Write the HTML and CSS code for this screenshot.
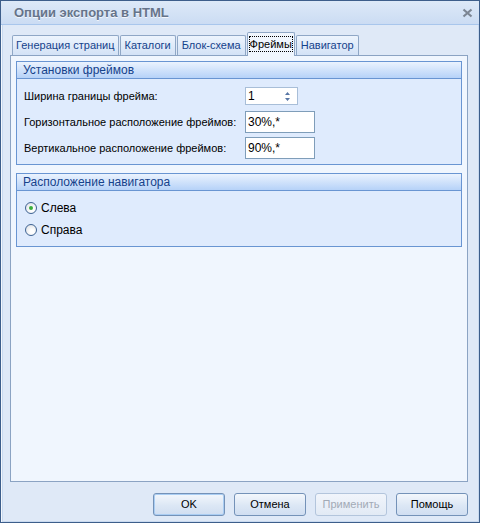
FILE: index.html
```html
<!doctype html>
<html lang="ru">
  <head>
    <meta charset="utf-8">
    <title>Опции экспорта в HTML</title>
    <link rel="stylesheet" href="styles.css">
  </head>
  <body>
    <div class="window">
      <div class="titlebar">
        <span class="title">Опции экспорта в HTML</span>
        <svg class="close" width="11" height="10" viewBox="0 0 11 10">
          <path d="M1.5 1.5 L9.5 8.5 M9.5 1.5 L1.5 8.5" stroke="#7c8694" stroke-width="2.2" fill="none"/>
        </svg>
      </div>
      <div class="client">
        <div class="tabs">
          <div class="tab">Генерация страниц</div>
          <div class="tab">Каталоги</div>
          <div class="tab">Блок-схема</div>
          <div class="tab active"><span class="focus">Фреймы</span></div>
          <div class="tab">Навигатор</div>
        </div>
        <div class="panel">
          <div class="group">
            <div class="group-head">Установки фреймов</div>
            <div class="group-body">
              <div class="row">
                <span class="label">Ширина границы фрейма:</span>
                <div class="spin">
                  <span>1</span>
                  <svg class="arrows" width="7" height="11" viewBox="0 0 7 11">
                    <path d="M3.5 1 L6 4 L1 4 Z M1 7 L6 7 L3.5 10 Z" fill="#5877a6"/>
                  </svg>
                </div>
              </div>
              <div class="row">
                <span class="label">Горизонтальное расположение фреймов:</span>
                <div class="field">30%,*</div>
              </div>
              <div class="row">
                <span class="label">Вертикальное расположение фреймов:</span>
                <div class="field">90%,*</div>
              </div>
            </div>
          </div>
          <div class="group second">
            <div class="group-head">Расположение навигатора</div>
            <div class="group-body radios">
              <div class="radio-row"><span class="radio checked"></span>Слева</div>
              <div class="radio-row"><span class="radio"></span>Справа</div>
            </div>
          </div>
        </div>
        <div class="buttons">
          <div class="btn default">OK</div>
          <div class="btn">Отмена</div>
          <div class="btn disabled">Применить</div>
          <div class="btn">Помощь</div>
        </div>
      </div>
    </div>
  </body>
</html>
```

FILE: styles.css
```css
body {
  margin: 0;
  font-family: "Liberation Sans", Arial, sans-serif;
  font-size: 11px;
  color: #000;
  background: #fff;
}

.window {
  width: 480px;
  height: 523px;
  box-sizing: border-box;
  border: 1px solid #3d5e8b;
  background: #dfe9f7;
  display: flex;
  flex-direction: column;
}

.titlebar {
  height: 23px;
  border-bottom: 1px solid #a8c6ec;
  background: linear-gradient(#dde9f8, #cbdcf3);
  display: flex;
  align-items: center;
  justify-content: space-between;
  padding: 0 6px 0 13px;
}

.title {
  font-weight: bold;
  font-size: 13px;
  color: #66748a;
  text-shadow: 0 1px 0 #f2f6fc;
}

.close {
  display: block;
}

.client {
  flex: 1;
  padding: 7px 0 0 9px;
  box-shadow: inset 1px 0 0 #f4f8fd, inset 2px 0 0 #c9daf0, inset -1px 0 0 #c9daf0, inset 0 -1px 0 #c9daf0;
}

.tabs {
  display: flex;
  align-items: flex-end;
  height: 23px;
  padding-left: 2px;
}

.tab {
  height: 19px;
  line-height: 19px;
  padding: 0 4px;
  margin-right: 1px;
  border: 1px solid #8fa7c6;
  border-bottom: none;
  border-radius: 2px 2px 0 0;
  background: linear-gradient(#edf4fd, #d3e2f6);
  color: #15428b;
}

.tab:first-child {
  padding: 0 3px;
}

.tab.active {
  height: 23px;
  line-height: 22px;
  margin: 0 1px -1px 0;
  padding: 0 2px;
  background: #f0f6fe;
  color: #000;
  position: relative;
  z-index: 1;
}

.focus {
  outline: 1px dotted #000;
  padding: 1px 0;
}

.panel {
  width: 446px;
  height: 415px;
  border: 1px solid #8ba3c3;
  background: #f0f6fe;
  padding: 5px;
}

.group {
  border: 1px solid #6995d2;
  background: #dfebfd;
}

.group.second {
  margin-top: 8px;
}

.group-head {
  height: 16px;
  line-height: 16px;
  padding-left: 6px;
  border-bottom: 1px solid #6995d2;
  background: linear-gradient(#ebf3fe, #b6d2f8);
  color: #15428b;
  font-size: 12px;
}

.group-body {
  padding: 4px 7px 3px 7px;
}

.row {
  display: flex;
  align-items: center;
  height: 26px;
}

.label {
  width: 221px;
}

.spin {
  height: 16px;
  border: 1px solid #a8bed8;
  background: #fff;
  display: flex;
  align-items: center;
  justify-content: space-between;
  padding: 0 6px 0 2px;
  width: 43px;
  font-size: 12px;
}

.field {
  width: 66px;
  height: 20px;
  line-height: 20px;
  border: 1px solid #7f9db9;
  background: #fff;
  padding-left: 2px;
  font-size: 12px;
}

.radios {
  padding: 6px 8px 5px 8px;
}

.radio-row {
  display: flex;
  align-items: center;
  height: 22px;
  font-size: 12px;
}

.radio {
  width: 10px;
  height: 10px;
  border: 1px solid #3e6393;
  border-radius: 50%;
  background: radial-gradient(circle at 60% 65%, #fff 20%, #dcdfe4 90%);
  margin-right: 4px;
  display: flex;
  align-items: center;
  justify-content: center;
}

.radio.checked::after {
  content: "";
  width: 4px;
  height: 4px;
  border-radius: 50%;
  background: #3aae3a;
}

.buttons {
  display: flex;
  gap: 9px;
  margin: 11px 0 0 143px;
}

.btn {
  width: 70px;
  height: 21px;
  line-height: 21px;
  text-align: center;
  border: 1px solid #7492b8;
  border-radius: 3px;
  background: linear-gradient(#f3f7fc, #dce7f5 55%, #d0def1);
}

.btn.default {
  box-shadow: inset 0 0 0 1px #a9cdf3;
}

.btn.disabled {
  border-color: #b3c5dc;
  background: linear-gradient(#f1f5fb, #e2eaf5);
  color: #a2aab6;
}
```
